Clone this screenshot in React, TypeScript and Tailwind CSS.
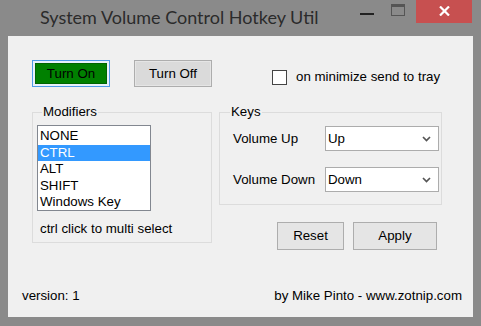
import React from "react";

const ui = "font-['Liberation_Sans',Arial,sans-serif] text-[13.3px] leading-[16px] text-black";

function Chevron() {
  return (
    <svg width="9" height="6" viewBox="0 0 9 6">
      <path d="M1 1l3.5 3.5L8 1" fill="none" stroke="#555" strokeWidth="1.7" />
    </svg>
  );
}

function Dropdown({ value }: { value: string }) {
  return (
    <div className="flex h-[25px] w-[114px] items-center border border-[#acacac] bg-white pl-[2px] pr-[7px]">
      <span>{value}</span>
      <span className="ml-auto flex">
        <Chevron />
      </span>
    </div>
  );
}

export default function App() {
  const modifiers = ["NONE", "CTRL", "ALT", "SHIFT", "Windows Key"];

  return (
    <div className="flex h-[326px] w-[481px] flex-col bg-[#8a8a8a]">
      {/* Title bar */}
      <div className="flex h-[36px] items-start">
        <span className="ml-[40px] mt-[5px] font-['Lato',sans-serif] text-[18px] leading-[24px] text-[#2b2b2b]">
          System Volume Control Hotkey Util
        </span>
        <div className="ml-auto mt-[13px] h-[2px] w-[14px] bg-[#222]" />
        <div className="ml-[17px] mt-[4px] h-[12px] w-[14px] border border-t-[3px] border-[#555]" />
        <div className="ml-[11px] mr-[9px] flex h-[23px] w-[56px] items-center justify-center bg-[#c75050] pb-[2px]">
          <svg width="11" height="10" viewBox="0 0 11 10">
            <path d="M1 0.5l9 9M10 0.5l-9 9" stroke="#fff" strokeWidth="2.2" />
          </svg>
        </div>
      </div>

      {/* Client area */}
      <div className={`mx-[8px] mb-[9px] flex flex-1 flex-col bg-[#f0f0f0] ${ui}`}>
        {/* Top row */}
        <div className="mt-[24px] flex items-start">
          <div className="ml-[24px] flex h-[27px] w-[78px] border border-[#4f9be6] bg-[#e8f1fb] p-[2px]">
            <div className="flex flex-1 items-center justify-center border border-[#006400] bg-[#008000]">
              Turn On
            </div>
          </div>
          <div className="ml-[24px] flex h-[27px] w-[78px] border border-[#adadad] bg-[#e5e5e5] p-[1px]">
            <div className="flex flex-1 items-center justify-center bg-[#dadada]">Turn Off</div>
          </div>
          <label className="ml-[60px] mt-[9px] flex items-center">
            <span className="h-[15px] w-[15px] border border-[#444] bg-white" />
            <span className="ml-[9px]">on minimize send to tray</span>
          </label>
        </div>

        {/* Middle row */}
        <div className="mt-[18px] flex items-start">
          <fieldset className="ml-[24px] h-[138px] w-[180px] border border-[#dcdcdc] px-[4px]">
            <legend className="ml-[5px] px-[1px] leading-[14px]">Modifiers</legend>
            <div className="mt-[6px] flex h-[86px] w-[114px] flex-col border border-[#828790] bg-white pt-[2px]">
              {modifiers.map((m) => (
                <div
                  key={m}
                  className={`h-[16.5px] pl-[2px] leading-[16.5px] ${
                    m === "CTRL" ? "bg-[#3399ff] text-white" : ""
                  }`}
                >
                  {m}
                </div>
              ))}
            </div>
            <div className="ml-[3px] mt-[10px]">ctrl click to multi select</div>
          </fieldset>

          <div className="ml-[7px] flex w-[223px] flex-col">
            <fieldset className="h-[100px] border border-[#dcdcdc]">
              <legend className="ml-[10px] px-[1px] leading-[14px]">Keys</legend>
              <div className="mt-[7px] flex items-center pl-[13px]">
                <span className="w-[92px]">Volume Up</span>
                <Dropdown value="Up" />
              </div>
              <div className="mt-[16px] flex items-center pl-[13px]">
                <span className="w-[92px]">Volume Down</span>
                <Dropdown value="Down" />
              </div>
            </fieldset>
            <div className="ml-[58px] mt-[17px] flex">
              <div className="flex h-[28px] w-[67px] items-center justify-center border border-[#adadad] bg-[#e5e5e5]">
                Reset
              </div>
              <div className="ml-[9px] flex h-[28px] w-[84px] items-center justify-center border border-[#adadad] bg-[#e5e5e5]">
                Apply
              </div>
            </div>
          </div>
        </div>

        {/* Footer */}
        <div className="mt-auto mb-[13px] flex pl-[14px] pr-[11px]">
          <span>version: 1</span>
          <span className="ml-auto">by Mike Pinto - www.zotnip.com</span>
        </div>
      </div>
    </div>
  );
}
